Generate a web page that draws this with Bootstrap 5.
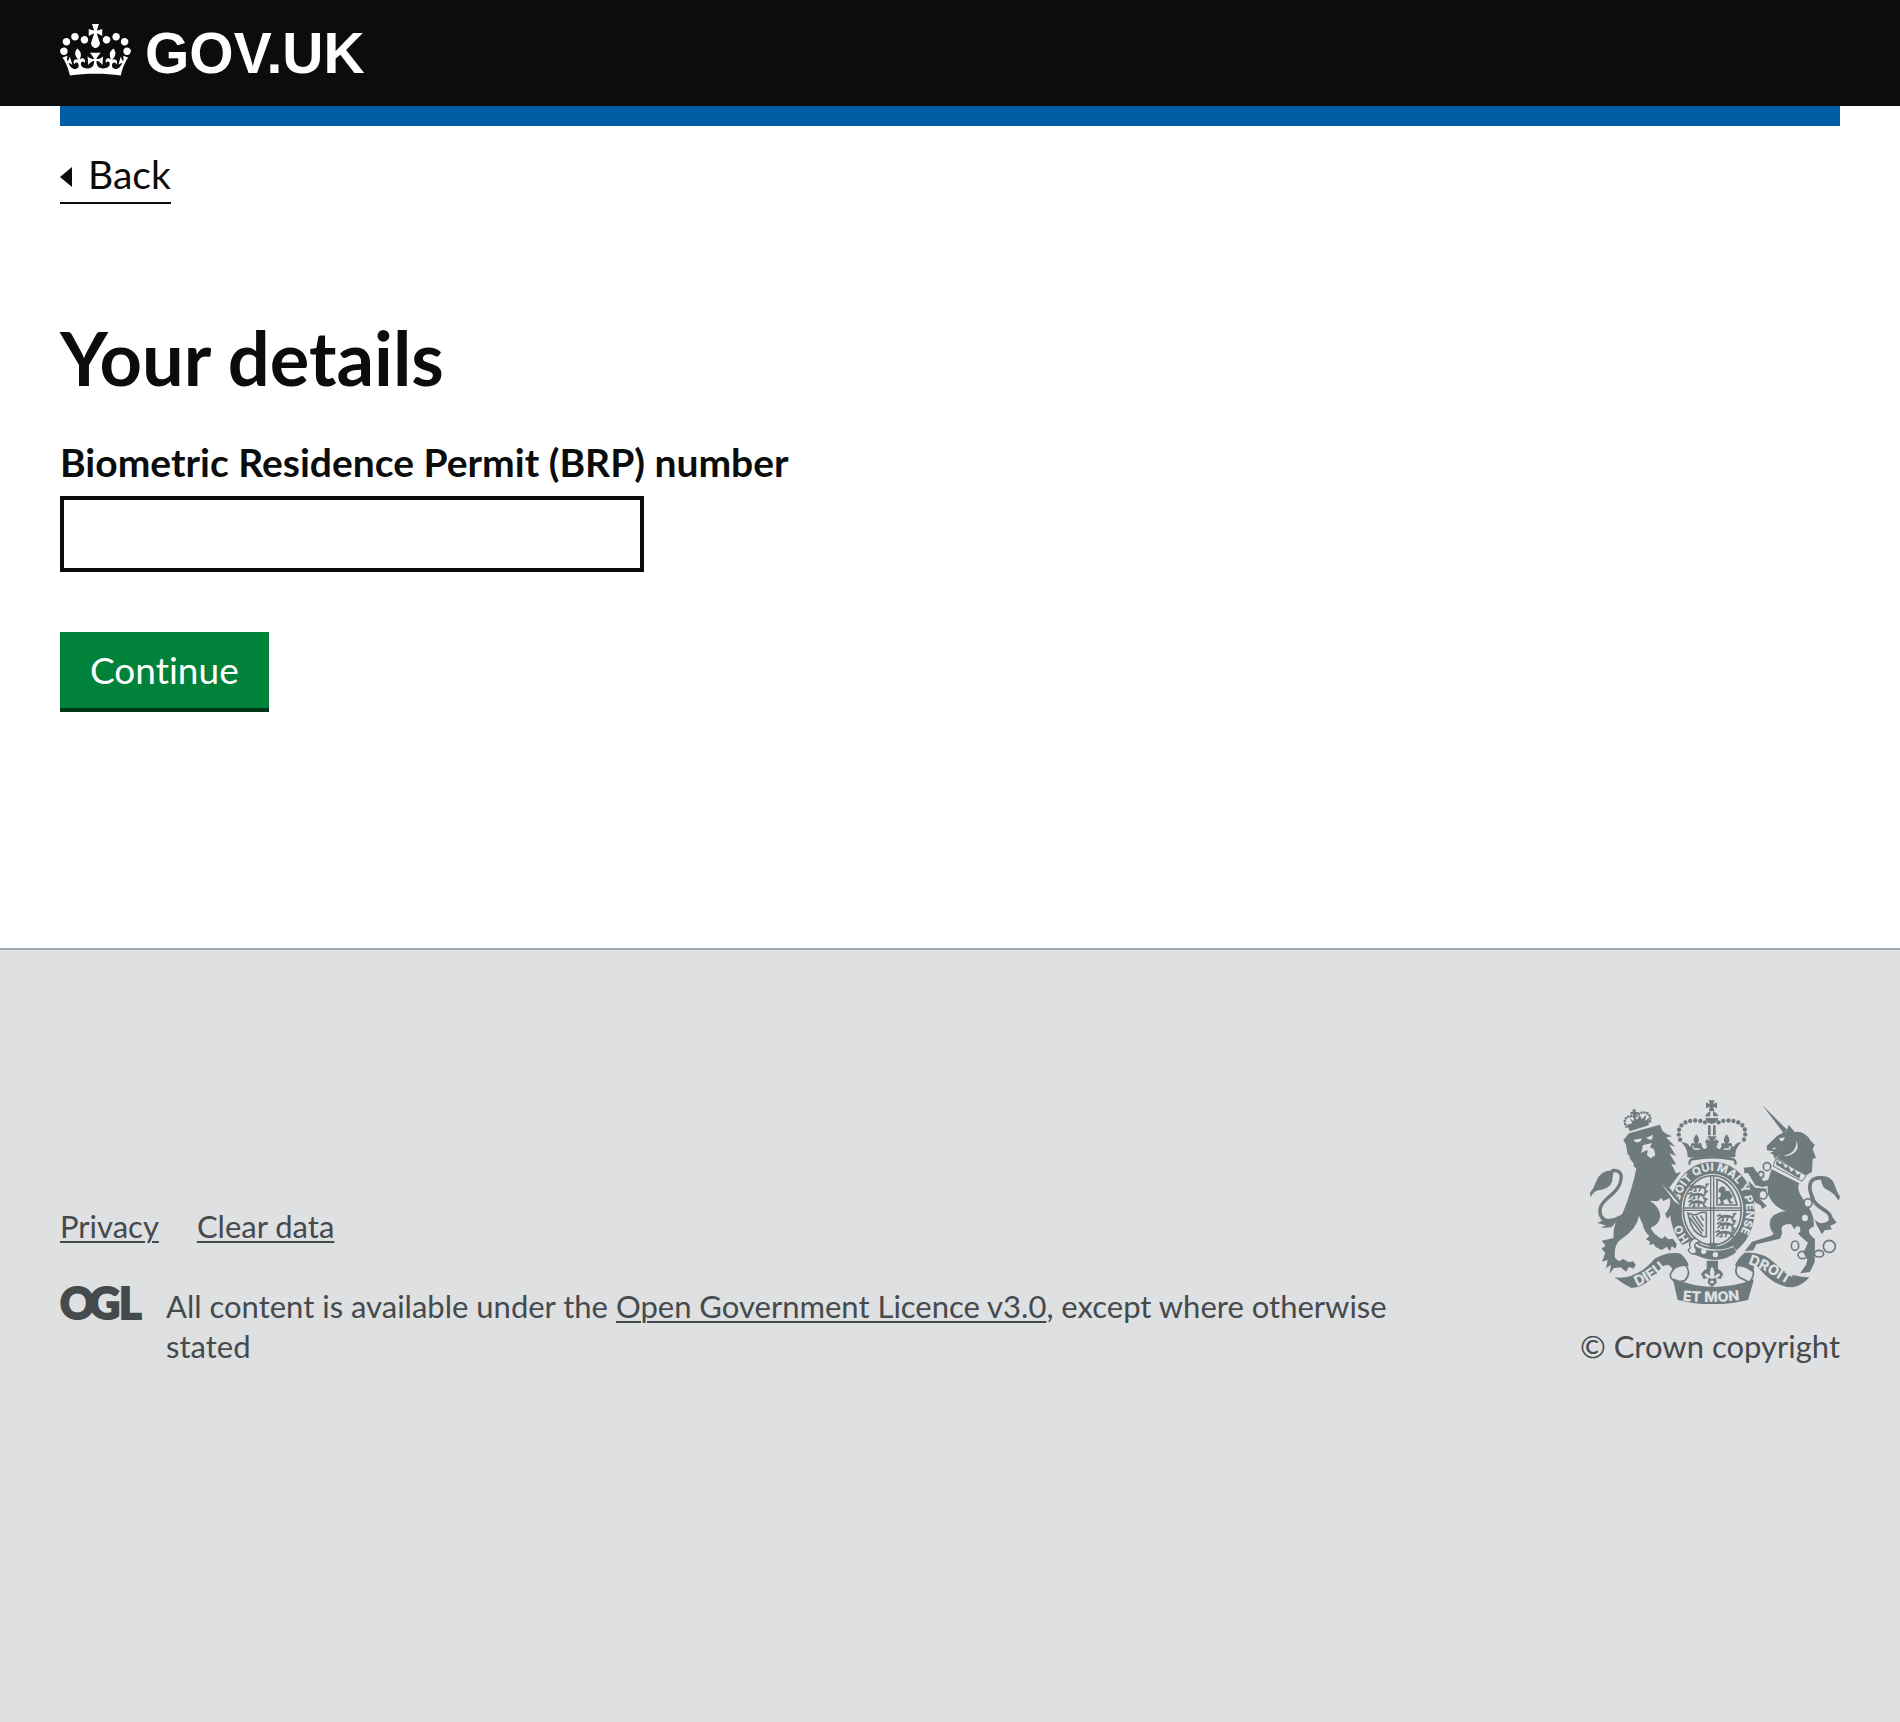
<!DOCTYPE html>
<html lang="en">
<head>
<meta charset="utf-8">
<meta name="viewport" content="width=device-width, initial-scale=1">
<title>Your details - GOV.UK</title>
<link rel="stylesheet" href="https://cdn.jsdelivr.net/npm/bootstrap@5.3.0/dist/css/bootstrap.min.css">
<style>
  body { font-family: Lato, "Liberation Sans", sans-serif; font-size: 39px; line-height: 48px; color: #0b0c0c; }
  .page-gutter { padding-left: 60px; padding-right: 60px; }
  .site-header { background: #0b0c0c; height: 106px; }
  .brand-link { color: #fff; gap: 14px; padding-top: 21px; }
  .brand-link svg { width: 71px; height: 52px; margin-top: 3px; }
  .brand-name { font: bold 57px/64px "Liberation Sans", Arial, sans-serif; }
  .blue-bar { background: #005ea5; height: 20px; }
  .back-link { color: #0b0c0c; gap: 16px; margin-top: 24px; padding-bottom: 4px; border-bottom: 2px solid #0b0c0c; }
  .back-link svg { width: 12px; height: 20px; margin-top: 6px; }
  .main-area { padding-top: 114px; padding-bottom: 236px; }
  .page-title { font-size: 74px; line-height: 80px; font-weight: 700; margin-bottom: 40px; }
  .field-label { font-weight: 700; margin-bottom: 10px; }
  .brp-input { width: 584px; max-width: 100%; height: 76px; border: 4px solid #0b0c0c; border-radius: 0; font-size: 39px; margin-bottom: 60px; }
  .btn-continue { background: #00823b; color: #fff; border: 0; border-bottom: 4px solid #003618; border-radius: 0; font-size: 37px; line-height: 48px; padding: 14px 30px; font-feature-settings: "liga" 0, "dlig" 0, "clig" 0; }
  .btn-continue:hover { background: #00692f; color: #fff; }
  .site-footer { background: #dee0e2; border-top: 2px solid #a1acb2; color: #454a4d; font-size: 31px; line-height: 40px; padding-top: 150px; padding-bottom: 60px; }
  .site-footer a { color: #454a4d; text-underline-offset: 3px; text-decoration-thickness: 2px; }
  .footer-links { gap: 38px; margin-bottom: 40px; }
  .licence-row { gap: 24px; }
  .ogl-logo { width: 82px; height: 34px; }
  .footer-left { max-width: 1380px; }
  .arms { width: 250px; height: 204px; margin-bottom: 22px; }
  .arms text { font-family: Inter, sans-serif; font-weight: 800; fill: #dee0e2; }
</style>
</head>
<body class="d-flex flex-column min-vh-100">
<header class="site-header page-gutter">
  <a class="brand-link d-inline-flex align-items-start text-decoration-none" href="#">
    <svg viewBox="0 0 132 97" fill="#fff" aria-hidden="true"><path d="M25 30.2c3.5 1.5 7.7-.2 9.1-3.7 1.5-3.6-.2-7.8-3.9-9.2-3.6-1.4-7.6.3-9.1 3.9-1.4 3.5.3 7.5 3.9 9zM9 39.5c3.6 1.5 7.8-.2 9.2-3.7 1.5-3.6-.2-7.8-3.9-9.1-3.6-1.5-7.6.2-9.1 3.8-1.4 3.5.3 7.5 3.8 9zM4.4 57.2c3.5 1.5 7.7-.2 9.1-3.8 1.5-3.6-.2-7.7-3.9-9.1-3.5-1.5-7.6.3-9.1 3.8-1.4 3.5.3 7.6 3.9 9.1zm38.3-21.4c3.5 1.5 7.7-.2 9.1-3.8 1.5-3.6-.2-7.7-3.9-9.1-3.6-1.5-7.6.3-9.1 3.8-1.3 3.6.4 7.7 3.9 9.1zm64.4-5.6c-3.6 1.5-7.8-.2-9.1-3.7-1.5-3.6.2-7.8 3.8-9.2 3.6-1.4 7.7.3 9.2 3.9 1.3 3.5-.4 7.5-3.9 9zm15.9 9.3c-3.6 1.5-7.7-.2-9.1-3.7-1.5-3.6.2-7.8 3.7-9.1 3.6-1.5 7.7.2 9.2 3.8 1.5 3.5-.3 7.5-3.8 9zm4.7 17.7c-3.6 1.5-7.8-.2-9.2-3.8-1.5-3.6.2-7.7 3.9-9.1 3.6-1.5 7.7.3 9.2 3.8 1.3 3.5-.4 7.6-3.9 9.1zM89.3 35.8c-3.6 1.5-7.8-.2-9.2-3.8-1.4-3.6.2-7.7 3.9-9.1 3.6-1.5 7.7.3 9.2 3.8 1.4 3.6-.3 7.7-3.9 9.1zM69.7 17.7l8.9 4.7V9.3l-8.9 2.8c-.2-.3-.5-.6-.9-.9L72.4 0H59.6l3.5 11.2c-.3.3-.6.5-.9.9l-8.8-2.8v13.1l8.8-4.7c.3.3.6.7.9.9l-5 15.4v.1c-.2.8-.4 1.6-.4 2.4 0 4.1 3.1 7.5 7 8.1h.2c.3 0 .7.1 1 .1.4 0 .7 0 1-.1h.2c4-.6 7.1-4.1 7.1-8.1 0-.8-.1-1.7-.4-2.4V34l-5.1-15.4c.4-.2.7-.6 1-.9zM66 92.8c16.9 0 32.8 1.1 47.1 3.2 4-16.9 8.9-26.7 14-33.5l-9.6-3.4c1 4.9 1.1 7.2 0 10.2-1.5-1.4-3-4.3-4.2-8.7L108.6 76c2.8-2 5-3.2 7.5-3.3-4.4 9.4-10 11.9-13.6 11.2-4.3-.8-6.3-4.6-5.6-7.9 1-4.7 5.7-5.9 8-.5 4.3-8.7-3-11.4-7.6-8.8 7.1-7.2 7.9-13.5 2.1-21.1-8 6.1-8.1 12.3-4.5 20.8-4.7-5.4-12.1-2.5-9.5 6.2 3.4-5.2 7.9-2 7.2 3.1-.6 4.3-6.4 7.8-13.5 7.2-10.3-.9-10.9-8-11.2-13.8 2.5-.5 7.1 1.8 11 7.3L80.2 60c-4.1 4.4-8 5.3-12.3 5.4 1.4-4.4 8-11.6 8-11.6H55.5s6.4 7.2 7.9 11.6c-4.2-.1-8-1-12.3-5.4l1.4 16.4c3.9-5.5 8.5-7.7 10.9-7.3-.3 5.8-.9 12.8-11.1 13.8-7.2.6-12.9-2.9-13.5-7.2-.7-5 3.8-8.3 7.1-3.1 2.7-8.7-4.6-11.6-9.4-6.2 3.7-8.5 3.6-14.7-4.6-20.8-5.8 7.6-5 13.9 2.2 21.1-4.7-2.6-11.9.1-7.7 8.8 2.3-5.5 7.1-4.2 8.1.5.7 3.3-1.3 7.1-5.7 7.9-3.5.7-9-1.8-13.5-11.2 2.5.1 4.7 1.3 7.5 3.3l-4.7-15.4c-1.2 4.4-2.7 7.2-4.3 8.7-1.1-3-.9-5.3 0-10.2l-9.5 3.4c5 6.9 9.9 16.7 14 33.5 14.8-2.1 30.8-3.2 47.7-3.2z"/></svg>
    <span class="brand-name">GOV.UK</span>
  </a>
</header>
<div class="page-gutter"><div class="blue-bar"></div></div>

<div class="page-gutter">
  <a class="back-link d-inline-flex align-items-center text-decoration-none" href="#">
    <svg viewBox="0 0 12 20" fill="#0b0c0c" aria-hidden="true"><path d="M12 0v20L0 10z"/></svg>
    <span>Back</span>
  </a>
</div>

<main class="main-area page-gutter">
  <h1 class="page-title">Your details</h1>
  <form>
    <label class="field-label d-block" for="brp">Biometric Residence Permit (BRP) number</label>
    <input class="brp-input form-control" id="brp" name="brp" type="text">
    <button class="btn btn-continue d-block" type="submit">Continue</button>
  </form>
</main>

<footer class="site-footer page-gutter flex-grow-1">
  <div class="d-flex justify-content-between align-items-end gap-5">
    <div class="footer-left">
      <ul class="footer-links list-unstyled d-flex flex-wrap">
        <li><a href="#">Privacy</a></li>
        <li><a href="#">Clear data</a></li>
      </ul>
      <div class="licence-row d-flex align-items-start">
        <svg class="ogl-logo flex-shrink-0 overflow-visible" viewBox="0 0 82 34" role="img" aria-label="OGL"><text x="0 29 59" y="33" font-family="Lato, sans-serif" font-weight="900" font-size="43" fill="#454a4d" stroke="#454a4d" stroke-width="2">OGL</text></svg>
        <span>All content is available under the <a href="#">Open Government Licence v3.0</a>, except where otherwise stated</span>
      </div>
    </div>
    <div class="d-flex flex-column align-items-end flex-shrink-0">
      <svg class="arms" viewBox="60 30 750 612" fill="#6f7a7c" role="img" aria-label="Royal coat of arms">
        <defs>
          <path id="garter" d="M427 479A101 118 0 0 1 427 243A101 118 0 0 1 427 479"/>
          <path id="dieu" d="M201 589Q250 572 330 498"/>
          <path id="mon" d="M338 632Q427 642 530 628"/>
          <path id="droit" d="M534 522Q582 536 676 598"/>
          <g id="passant" fill="none" stroke="#6f7a7c" stroke-width="5" stroke-linecap="round" stroke-linejoin="round"><path d="M2 5l8-4 4 6-6 3M12 8h28l8 4M14 6q14-5 28 0M12 9l-8 8M18 10l2 9h-6M34 10l-4 9M46 10l2 9h6M46 8q10-1 4-8l7-2"/></g>
          <g id="fleur"><path d="M0-24C10-12 10-4 4 4 14-2 20 6 14 14L6 10 8 18H-8L-6 10-14 14C-20 6-14-2-4 4-10-4-10-12 0-24z"/></g>
        </defs>
        <!-- imperial crown -->
        <path d="M416 31h18l-5 12 12-6v18l-12-5 5 14h-18l4-14-12 5V37l12 6zM406 80q3-13 15-15v14zM429 65q13 2 16 14h-16zM406 84h39q-3 16-20 18-16-2-19-18zM414 106h8v30h-8zM429 106h8v30h-8z"/>
        <g fill="none" stroke="#6f7a7c" stroke-width="13" stroke-linecap="round" stroke-dasharray="0 15">
          <path d="M405 97C375 84 318 92 327 138Q330 152 336 158"/><path d="M446 97C476 84 534 92 525 138Q522 152 516 158"/>
        </g>
        <path d="M334 157q20 0 24 12 10-2 13 10h22l-14-10 14-4 8 12q8 0 13-10l-10-14h44l-11 14q5 10 13 10l8-12 14 4-14 10h22q3-12 13-10 4-12 22-12-20 16-19 44-12 1-22 3-50-7-96 0-14-2-25-2 0-28-19-45zM412 139h28l-9 14 11-7v24l-12-8 7 13h-23l8-13-13 8v-24l12 7z"/>
        <use href="#fleur" x="379" y="157"/><use href="#fleur" x="470" y="157"/>
        <path d="M359 224Q356 208 372 207Q427 197 482 207Q500 208 496 224" fill="none" stroke="#6f7a7c" stroke-width="7"/>
        <!-- garter and shield -->
        <ellipse cx="427" cy="361" rx="127" ry="146"/>
        <ellipse cx="427" cy="361" rx="93" ry="110" fill="#dee0e2"/>
        <ellipse cx="427" cy="361" rx="87" ry="104" fill="none" stroke="#6f7a7c" stroke-width="5"/>
        <path d="M422 258v204M431 258v204M340 354h174M340 361h174" stroke="#6f7a7c" stroke-width="4" fill="none"/>
        <use href="#passant" x="358" y="284"/><use href="#passant" x="354" y="307"/><use href="#passant" x="354" y="330"/>
        <use href="#passant" x="440" y="373"/><use href="#passant" x="440" y="396"/><use href="#passant" x="436" y="421"/>
        <path d="M441 268q45 11 60 77h-60z" fill="none" stroke="#6f7a7c" stroke-width="5"/>
        <path d="M447 296l9-8 10 5 0 9 12 1 10 16-8 12 11 8-12 2-8-15-12 6 4 10-17 2 7-7-4-10-9 0 11-7 2-11-8-3z"/>
        <path d="M354 370q20 9 33 0 8-5 22-2v72h-9q-34-12-43-56zM366 378l34 46M378 378l22 32M360 384l36 48M391 376l10 16" fill="none" stroke="#6f7a7c" stroke-width="5"/>
        <path d="M410 463q17-10 38 0l-20 12z"/>
        <text font-size="34"><textPath href="#garter" startOffset="78">HO</textPath></text>
        <text font-size="34"><textPath href="#garter" startOffset="198">SOIT QUI MAL Y PENSE</textPath></text>
        <path d="M352 458q15 32 74 39 50 3 74-14" fill="none" stroke="#dee0e2" stroke-width="38"/>
        <path d="M363 458q22 22 64 24 38 1 64-11l8 15q-24 22-64 24-40-4-74-22z"/>
        <path d="M371 446q-18 12-10 28-14 6 5 18 22 0 8-22 0-14 14-13-5-13-17-11z" stroke="#6f7a7c" stroke-width="4" fill="#dee0e2"/>
        <circle cx="401" cy="484" r="8" fill="#dee0e2"/><circle cx="436" cy="494" r="8" fill="#dee0e2"/>
        <!-- lion -->
        <path d="M160 150L177 130 270 104 277 122Q289 134 306 139L288 142 316 170 298 164 318 198 298 190 319 224 304 222 318 250 333 246 298 293 334 337 336 386 328 372 322 387 315 375 307 390 304 374 292 386 285 372Q306 348 299 324L280 333 274 324 263 334 240 332Q268 350 271 378 268 404 242 413 250 435 277 446L285 438 294 448 309 446 320 462 317 476 305 469 300 484 290 470 275 480 258 472 250 461 238 466 240 455 228 448 238 438Q222 424 218 402L207 378Q200 418 154 447 130 464 135 503L146 514 160 507 175 516 190 514 197 525 190 536 177 530 168 545 152 532 132 534 119 551 123 524 108 535 113 510 96 515 106 488 94 476 107 467 95 452 131 444Q126 400 158 370 186 300 200 232L180 206 173 174z"/>
        <path d="M168 165l16 6-3 16-7 10zM200 199l8 2-4 38-14-11z"/>
        <path d="M190 150l25-5-3 9q-14 8-22-4zM229 143l20-9-3 14q-10 4-17-5zM218 166l28-7-6 13 12 6 4 18-14 9-11-9 2-16-20 8 4-12zM274 281l29 31 28 33-16-9z" fill="#dee0e2"/>
        <path d="M172 104l15-4-8-16 12 10 1-18 9 14 8-16 6 14 14-14-4 18 12-8-1 22-57 18z"/>
        <path d="M170 110C154 90 174 70 196 82C210 58 250 64 239 98" fill="none" stroke="#6f7a7c" stroke-width="8" stroke-linecap="round" stroke-dasharray="0 9"/>
        <path d="M188 58h9v8h8v7h-8v9h-8v-9h-8v-7h7z"/>
        <path d="M125 242Q158 238 153 269C148 310 96 326 91 354Q85 385 112 392L146 388" fill="none" stroke="#6f7a7c" stroke-width="10"/>
        <path d="M132 241Q92 238 78 275 72 295 60 308L62 322Q70 300 96 299 130 290 128 260zM76 385q20 17 70-7l18-8-40 42-32 2 15-8-26-7 14-5z"/>
        <!-- unicorn -->
        <path d="M576 44L652 120 640 128zM590 168L622 137 650 123 656 104 674 126Q704 122 722 152L734 164 728 178 738 204 728 206 726 246 708 256 620 204 634 190 614 206 610 194 600 188 612 184 591 181z"/>
        <path d="M627 145l18-3-6 11q-10 3-12-8zM679 152q2 38-41 46 20 2 34-9 18-15 7-37zM604 176l16-4-6 6z" fill="#dee0e2"/>
        <path d="M618 206L709 256 696 274 609 228z" fill="#dee0e2" stroke="#6f7a7c" stroke-width="3"/>
        <path d="M618 224l2-15 10 14 8-5 8 17 9-7 8 18 11-8 6 16 12-3-4 15z"/>
        <path d="M605 238L688 280Q678 298 700 328 737 376 731 410 700 420 735 448L734 516 720 546 690 550 708 525 712 508 700 488 714 458Q692 440 682 428L662 402Q626 402 637 428L630 446 559 463 550 481 524 484 546 455 602 438 611 432Q588 400 609 377 632 362 650 364 612 353 595 315 588 280 605 238z"/>
        <path d="M522 233L549 230 581 274 598 268 604 286 577 291 556 286 534 249 523 250zM536 272L556 293 590 296 584 312 565 310 568 325 590 348 576 357 572 346 554 337 543 310z"/>
        <g fill="#dee0e2"><ellipse cx="705" cy="384" rx="9" ry="10"/><ellipse cx="683" cy="419" rx="8" ry="10"/></g>
        <g fill="none" stroke="#6f7a7c" stroke-width="5"><ellipse cx="591" cy="230" rx="11" ry="12"/><ellipse cx="573" cy="254" rx="8" ry="9"/><ellipse cx="579" cy="314" rx="12" ry="13" fill="#dee0e2"/><ellipse cx="714" cy="339" rx="12" ry="13" fill="#dee0e2"/><ellipse cx="675" cy="467" rx="11" ry="14"/><ellipse cx="698" cy="495" rx="14" ry="11"/><ellipse cx="747" cy="491" rx="14" ry="10"/><circle cx="778" cy="469" r="18"/></g>
        <path d="M730 328C704 274 730 262 754 264M724 318C738 362 786 356 782 392L764 416" fill="none" stroke="#6f7a7c" stroke-width="11"/>
        <path d="M744 259Q782 252 794 284 798 302 810 320L806 332Q796 314 780 304 754 296 753 268zM734 388q22 26 54-6l12 16-20 10 6 10-22 3-8 12-16-28z"/>
        <!-- motto scroll -->
        <path d="M134 562Q200 570 254 506 290 484 330 490 352 508 356 528 328 526 308 541 300 516 276 530 232 592 184 594 158 582 134 562zM718 562Q652 562 620 524 580 484 524 488 500 508 495 528 532 528 552 552 548 520 560 526 610 592 668 592 696 588 718 562zM308 565Q427 615 552 568 542 604 534 630 427 656 323 630 316 600 308 565z"/>
        <g fill="none" stroke="#6f7a7c" stroke-width="5"><path d="M314 536Q286 558 318 577L344 572Q366 550 346 524"/><path d="M503 526Q490 546 508 562L538 577Q560 550 543 530"/></g>
        <g font-size="43"><text><textPath href="#dieu">DIEU</textPath></text><text><textPath href="#mon">ET MON</textPath></text><text><textPath href="#droit">DROIT</textPath></text></g>
        <path d="M410 512h34v24l8 6 8 10-8 15-14-3 2 14-14 14-13-14 2-14-14 3-8-15 10-12 7-2z"/>
        <path d="M426 530q12 12 5 30l15-10 5 5-7 7-17 4-16-3-8-8 4-6 15 10q-6-17 4-29zM421 572h10v8h-10z" fill="#dee0e2"/>
      </svg>
      <span>© Crown copyright</span>
    </div>
  </div>
</footer>
<script src="https://cdn.jsdelivr.net/npm/bootstrap@5.3.0/dist/js/bootstrap.bundle.min.js"></script>
</body>
</html>
